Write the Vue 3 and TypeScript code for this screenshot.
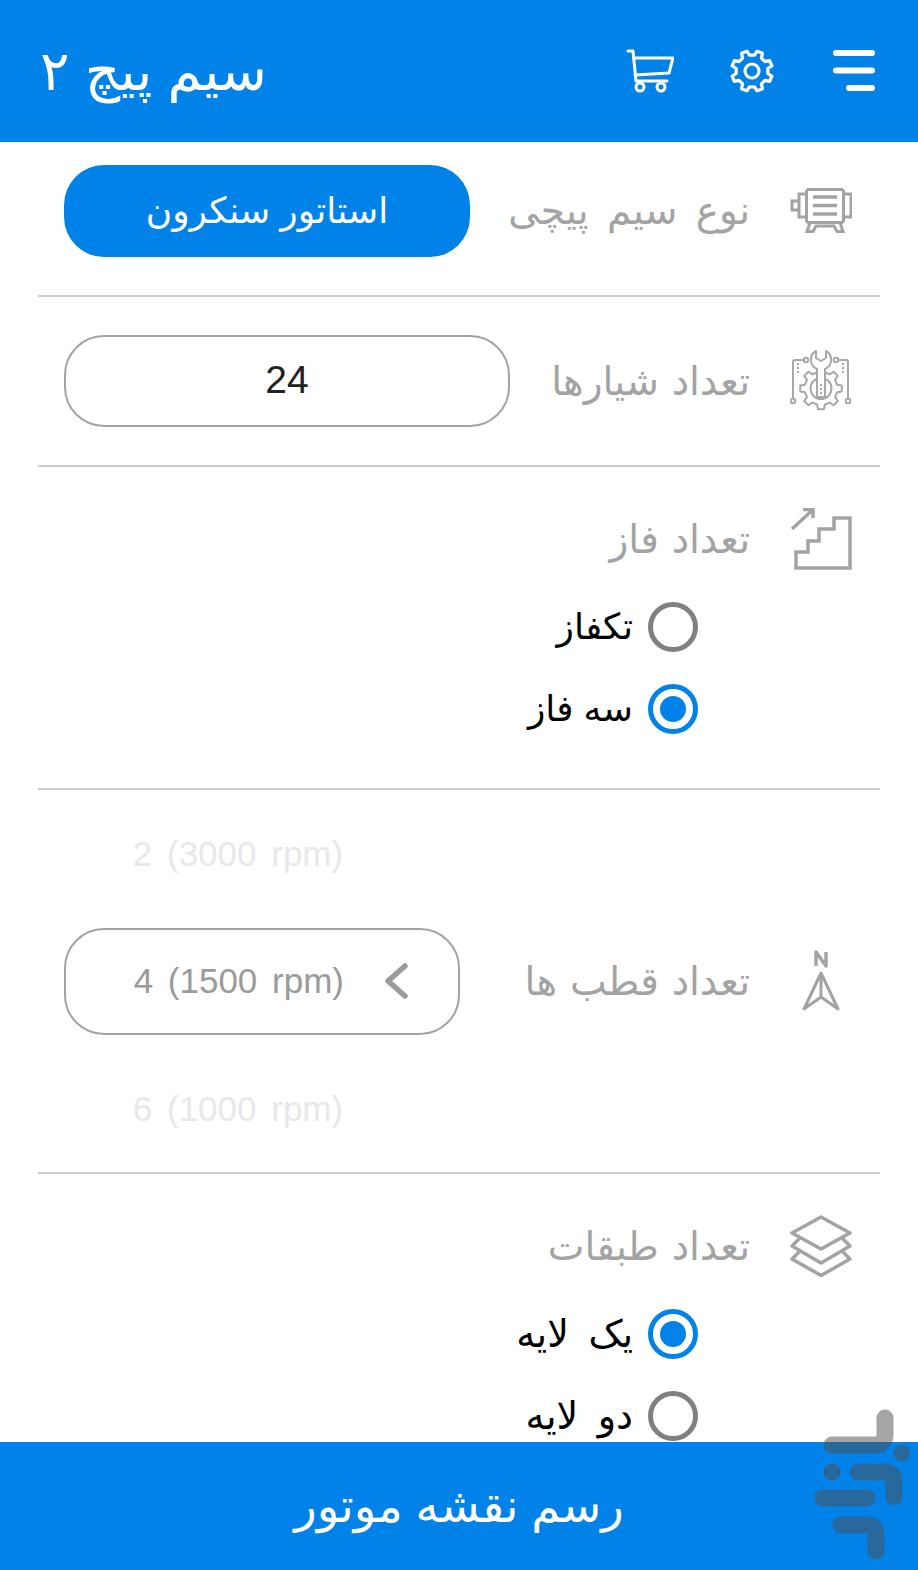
<script setup lang="ts">
import { ref } from 'vue'

const phase = ref('three')
const layers = ref('one')

const phaseOptions = [
  { id: 'single', label: 'تکفاز' },
  { id: 'three', label: 'سه فاز' }
]
const layerOptions = [
  { id: 'one', label: 'یک لایه' },
  { id: 'two', label: 'دو لایه' }
]

// outline of an 8 tooth cog, start is the angle of the first tooth
function cog(cx: number, cy: number, outer: number, inner: number, start: number) {
  const step = Math.PI / 4
  const pts: string[] = []
  const at = (r: number, a: number) =>
    `${(cx + r * Math.sin(a)).toFixed(2)} ${(cy - r * Math.cos(a)).toFixed(2)}`
  for (let i = 0; i < 8; i++) {
    const a = start + i * step
    pts.push(at(inner, a - step * 0.3), at(outer, a - step * 0.18), at(outer, a + step * 0.18), at(inner, a + step * 0.3))
  }
  return `M${pts.join('L')}z`
}

const headerGear = cog(23, 23, 20.5, 16, Math.PI / 8)
const toolGear = cog(31, 38.5, 21, 16.5, 0)
</script>

<template>
  <div class="screen" dir="rtl">
    <header class="topbar">
      <div class="actions">
        <svg class="menu" viewBox="0 0 42 42" fill="none" stroke="#fff" stroke-width="6" stroke-linecap="round">
          <path d="M3 3h36M3 20.500h36M16 38h23" />
        </svg>
        <svg class="gear" viewBox="0 0 46 46" fill="none" stroke="#fff" stroke-width="3.200" stroke-linejoin="round">
          <path :d="headerGear" />
          <circle cx="23" cy="23" r="7" />
        </svg>
        <svg class="cart" viewBox="0 0 48 46" fill="none" stroke="#fff" stroke-width="3" stroke-linecap="round" stroke-linejoin="round">
          <path d="M2 3h5l3 30h31" />
          <path d="M8 10h39l-4 15-34 2" />
          <circle cx="14" cy="39" r="4" />
          <circle cx="35" cy="39" r="4" />
        </svg>
      </div>
      <h1 class="title">سیم پیچ ۲</h1>
    </header>

    <main class="content">
      <section class="row type-row">
        <svg class="icon motor" viewBox="0 0 62 48" fill="none" stroke="#a3a3a3" stroke-width="3">
          <path d="M18 2.500h34l1.500 1.500v30l-1.500 1.500H18l-1.500-1.500V4z" />
          <path d="M16.500 7H9v23h7.500M53.500 7H61v23h-7.500M9 14H2v9h7" />
          <path d="M23 10h24M23 18.500h24M23 27h24" stroke-width="3.500" />
          <path d="M20 35.500l-3 9h6l3-5.500h18l3 5.500h6l-3-9" />
        </svg>
        <label class="label wide">نوع سیم پیچی</label>
        <button class="type-btn">استاتور سنکرون</button>
      </section>

      <section class="row slots-row">
        <svg class="icon tools" viewBox="0 0 62 62" fill="none" stroke="#a8a8a8" stroke-width="2">
          <path :d="toolGear" stroke-linejoin="round" />
          <circle cx="31" cy="38.500" r="10.500" />
          <path d="M14 10H5q-2 0-2 2v37M48 10h8q2 0 2 2v37" />
          <circle cx="16" cy="10" r="2.200" />
          <circle cx="46" cy="10" r="2.200" />
          <circle cx="3" cy="51" r="2.300" />
          <circle cx="58" cy="51" r="2.300" />
          <path d="M26 1a10 10 0 0 0 1 18v28h8V19a10 10 0 0 0 1-18v7l-5 3-5-3z" fill="#fff" stroke-linejoin="round" />
          <path d="M8 13v11M53 13v11M31 34v12" stroke-dasharray="2 2" />
        </svg>
        <label class="label">تعداد شیارها</label>
        <div class="number-box">24</div>
      </section>

      <section class="group phase-group">
        <div class="group-head">
          <svg class="icon stairs" viewBox="0 0 62 62" fill="none" stroke="#a3a3a3" stroke-width="3.500">
            <path d="M6 60V44h12V33h11V21h15V10h16v50z" />
            <path d="M2 21L23 1.500M13 1.500h10V10" />
          </svg>
          <label class="label">تعداد فاز</label>
        </div>
        <div class="radios">
          <div v-for="opt in phaseOptions" :key="opt.id" class="radio" @click="phase = opt.id">
            <span class="dot" :class="{ on: phase === opt.id }"></span>
            <span class="radio-text">{{ opt.label }}</span>
          </div>
        </div>
      </section>

      <section class="row poles-row">
        <svg class="icon north" viewBox="0 0 40 62" fill="none" stroke="#a3a3a3" stroke-width="3" stroke-linejoin="round">
          <path d="M15 16V2l10 14V2" stroke-width="3.500" />
          <path d="M20 23L3 59l17-12 17 12zM20 23v24" />
        </svg>
        <label class="label">تعداد قطب ها</label>
        <div class="picker">
          <span class="faded">2 (3000 rpm)</span>
          <div class="picker-box">
            <svg class="chev" viewBox="0 0 24 36" fill="none" stroke="#9b9b9b" stroke-width="5.500" stroke-linecap="round" stroke-linejoin="round">
              <path d="M21 3L4 18l17 15" />
            </svg>
            <span class="picker-text">4 (1500 rpm)</span>
          </div>
          <span class="faded">6 (1000 rpm)</span>
        </div>
      </section>

      <section class="group layers-group">
        <div class="group-head">
          <svg class="icon stack" viewBox="0 0 62 62" fill="none" stroke="#a3a3a3" stroke-width="3.500" stroke-linejoin="round">
            <path d="M31 2l29 16-29 16L2 18z" />
            <path d="M10 23l-8 8 29 17 29-17-8-8" />
            <path d="M10 36l-8 8 29 16.500L60 44l-8-8" />
          </svg>
          <label class="label">تعداد طبقات</label>
        </div>
        <div class="radios">
          <div v-for="opt in layerOptions" :key="opt.id" class="radio" @click="layers = opt.id">
            <span class="dot" :class="{ on: layers === opt.id }"></span>
            <span class="radio-text">{{ opt.label }}</span>
          </div>
        </div>
      </section>
    </main>

    <footer class="draw-bar">رسم نقشه موتور</footer>

    <svg class="mark" viewBox="0 0 104 162" fill="none" stroke="#505050" stroke-width="17" stroke-linecap="round" stroke-linejoin="round">
      <path d="M71 10v16q0 11-11 11H18" />
      <circle cx="88" cy="45" r="8.500" fill="#505050" stroke="none" />
      <circle cx="18" cy="64" r="8.500" fill="#505050" stroke="none" />
      <path d="M44 64h26q10 0 10 10v15" />
      <path d="M9 90h44" />
      <path d="M27 117h25q10 0 10 10v16" />
    </svg>
  </div>
</template>

<style scoped>
.screen {
  position: relative;
  width: 918px;
  height: 1570px;
  display: flex;
  flex-direction: column;
  overflow: hidden;
  background: #fff;
  font-family: "Liberation Sans", "DejaVu Sans", sans-serif;
}

.topbar {
  height: 142px;
  flex: none;
  background: #0082e9;
  display: flex;
  align-items: center;
  justify-content: space-between;
  padding: 0 43px 0 40px;
  box-sizing: border-box;
}

.actions {
  display: flex;
  align-items: center;
  gap: 58px;
}

.menu {
  width: 42px;
  height: 42px;
}

.gear {
  width: 46px;
  height: 46px;
}

.cart {
  width: 48px;
  height: 46px;
  margin-right: -3px;
}

.title {
  margin: 0;
  color: #fff;
  font-size: 55px;
  font-weight: 400;
  line-height: 1;
}

.content {
  flex: 1;
  min-height: 0;
  overflow: hidden;
  padding: 0 38px;
}

.row {
  display: flex;
  align-items: center;
  border-bottom: 2px solid #ccc;
  padding: 0 28px 0 26px;
  box-sizing: border-box;
}

.type-row {
  height: 155px;
  padding-bottom: 16px;
}

.slots-row {
  height: 170px;
}

.poles-row {
  height: 384px;
}

.icon {
  flex: none;
}

.motor {
  width: 62px;
  height: 48px;
}

.tools,
.stairs,
.stack {
  width: 62px;
  height: 62px;
}

.north {
  width: 40px;
  height: 62px;
  margin: 0 11px;
}

.label {
  margin-right: 40px;
  font-size: 39px;
  word-spacing: 2px;
  color: #a3a3a3;
  line-height: 1;
  white-space: nowrap;
}

.label.wide {
  word-spacing: 7.500px;
}

.type-btn {
  margin-right: auto;
  width: 406px;
  height: 92px;
  border: 0;
  border-radius: 40px;
  background: #0082e9;
  color: #fff;
  font: inherit;
  font-size: 36px;
}

.number-box {
  margin-right: auto;
  width: 446px;
  height: 92px;
  box-sizing: border-box;
  border: 2.500px solid #a3a3a3;
  border-radius: 40px;
  display: flex;
  align-items: center;
  justify-content: center;
  padding-bottom: 2px;
  font-size: 39px;
  color: #222;
}

.group {
  border-bottom: 2px solid #ccc;
  box-sizing: border-box;
  padding: 0 28px 0 26px;
}

.phase-group {
  height: 323px;
}

.layers-group {
  border-bottom: 0;
}

.group-head {
  display: flex;
  align-items: center;
  padding-top: 41px;
}

.radios {
  display: flex;
  flex-direction: column;
  gap: 32px;
  margin-top: 32px;
  padding-right: 154px;
}

.radio {
  display: flex;
  align-items: center;
  gap: 15px;
}

.dot {
  width: 50px;
  height: 50px;
  box-sizing: border-box;
  border: 5px solid #808080;
  border-radius: 50%;
  display: flex;
  align-items: center;
  justify-content: center;
}

.dot.on {
  border-color: #0082e9;
}

.dot.on::after {
  content: "";
  width: 26px;
  height: 26px;
  border-radius: 50%;
  background: #0082e9;
}

.radio-text {
  font-size: 36px;
  color: #000;
  line-height: 50px;
}

.layers-group .radio-text {
  font-size: 38px;
  word-spacing: 9px;
}

.picker {
  margin-right: auto;
  width: 396px;
  display: flex;
  flex-direction: column;
  align-items: center;
}

.picker-box {
  width: 100%;
  height: 107px;
  box-sizing: border-box;
  border: 2.500px solid #a3a3a3;
  border-radius: 40px;
  display: flex;
  align-items: center;
  padding-right: 50px;
  gap: 40px;
  margin: 54px 0;
}

.chev {
  width: 24px;
  height: 36px;
}

.picker-text {
  direction: ltr;
  font-size: 35px;
  word-spacing: 5px;
  color: #9b9b9b;
}

.faded {
  direction: ltr;
  font-size: 35px;
  word-spacing: 5px;
  color: #e8e8e8;
  line-height: 40px;
  padding-right: 48px;
}

.draw-bar {
  height: 128px;
  flex: none;
  background: #0082e9;
  color: #fff;
  font-size: 46.500px;
  display: flex;
  align-items: center;
  justify-content: center;
}

.mark {
  position: absolute;
  right: 0;
  bottom: 0;
  width: 104px;
  height: 162px;
  opacity: 0.5;
}
</style>

<style>
html,
body {
  margin: 0;
  background: #fff;
}
</style>
